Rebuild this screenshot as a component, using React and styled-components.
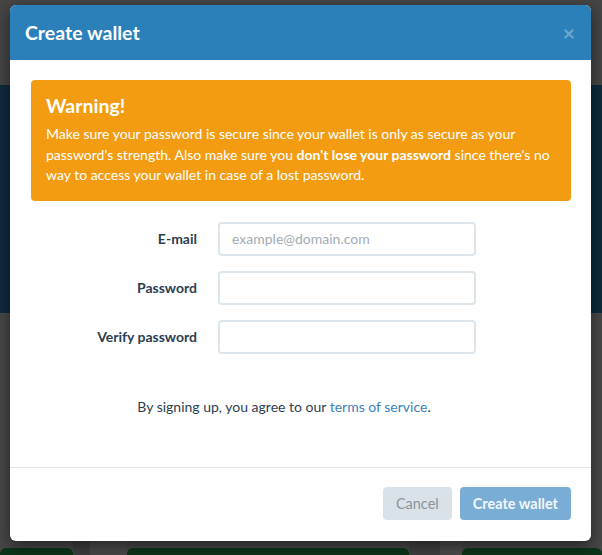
import React from "react";
import styled, { createGlobalStyle } from "styled-components";

const GlobalStyle = createGlobalStyle`
	html, body {
		margin: 0;
		padding: 0;
		background: #474747;
	}
	* {
		box-sizing: border-box;
	}
	body {
		font-family: Lato, "Open Sans", "Liberation Sans", sans-serif;
		color: #2c3e50;
	}
`;

const Page = styled.div`
	position: relative;
	width: 602px;
	height: 555px;
	overflow: hidden;
	background: #474747;
	display: flex;
	flex-direction: column;
`;

const TopBar = styled.div`
	height: 85px;
	background: #454545;
`;

const Hero = styled.div`
	height: 228px;
	background: #0f2a3d;
`;

const Content = styled.div`
	flex: 1;
	display: flex;
	align-items: flex-end;
	background: linear-gradient(
		90deg,
		#474747 0 73px,
		#3f3f3f 73px 90px,
		#4a4a4a 90px 127px,
		#474747 127px 409px,
		#404040 409px 440px,
		#4b4b4b 440px 462px,
		#474747 462px
	);
`;

const Cards = styled.div`
	display: flex;
	width: 100%;
	height: 7px;
`;

const Card = styled.div`
	width: ${(p) => p.w}px;
	margin-left: ${(p) => p.ml || 0}px;
	background: #0c3519;
	border-radius: 6px 6px 0 0;
`;

const Modal = styled.div`
	position: absolute;
	left: 10px;
	top: 5px;
	width: 581px;
	height: 536px;
	background: #fff;
	border-radius: 6px;
	box-shadow: 0 5px 15px rgba(0, 0, 0, 0.5);
	display: flex;
	flex-direction: column;
	overflow: hidden;
`;

const Header = styled.div`
	height: 55px;
	background: #2b80ba;
	display: flex;
	align-items: center;
	justify-content: space-between;
	padding: 0 16px 0 15px;
`;

const Title = styled.h4`
	margin: 0;
	font-size: 19.5px;
	font-weight: 700;
	color: #fff;
	line-height: 1.1;
`;

const Close = styled.button`
	border: 0;
	background: none;
	padding: 0;
	font-family: inherit;
	font-size: 21px;
	font-weight: 700;
	line-height: 1;
	color: #fff;
	opacity: 0.3;
	cursor: pointer;
`;

const Body = styled.div`
	flex: 1;
	padding: 20px 20px 0 21px;
	display: flex;
	flex-direction: column;
`;

const Alert = styled.div`
	background: #f39c12;
	color: #fff;
	border-radius: 4px;
	padding: 15px 15px 15px;

	h4 {
		margin: 0 0 8px;
		font-size: 19.5px;
		font-weight: 700;
		line-height: 1.1;
	}

	p {
		margin: 0;
		font-size: 14px;
		line-height: 20.5px;
	}
`;

const Form = styled.form`
	display: grid;
	grid-template-columns: 166px 258px;
	column-gap: 21px;
	row-gap: 15px;
	margin-top: 21px;
	align-items: center;
`;

const Label = styled.label`
	text-align: right;
	font-size: 14px;
	font-weight: 700;
	color: #2c3e50;
`;

const Input = styled.input`
	height: 34px;
	width: 100%;
	border: 2px solid #dce4ec;
	border-radius: 4px;
	padding: 6px 12px;
	font-family: inherit;
	font-size: 14px;
	color: #2c3e50;
	outline: none;

	&::placeholder {
		color: #a3abb2;
	}
`;

const Terms = styled.p`
	margin: 44px 0 0;
	padding-right: 34px;
	text-align: center;
	font-size: 14px;
	color: #2c3e50;

	a {
		color: #3a7fb4;
		text-decoration: none;
	}
`;

const Footer = styled.div`
	height: 74px;
	border-top: 1px solid #e5e5e5;
	display: flex;
	justify-content: flex-end;
	align-items: flex-start;
	gap: 8px;
	padding: 19px 20px 0;
`;

const Button = styled.button`
	height: 33px;
	border: 0;
	border-radius: 4px;
	padding: 0 13px;
	font-family: inherit;
	font-size: 14.5px;
	font-weight: ${(p) => (p.primary ? 700 : 400)};
	background: ${(p) => (p.primary ? "#79add5" : "#dae2e9")};
	color: ${(p) => (p.primary ? "#f2f7fb" : "#8a949b")};
	cursor: not-allowed;
`;

export default function App() {
	return (
		<>
			<GlobalStyle />
			<Page>
				<TopBar />
				<Hero />
				<Content>
					<Cards>
						<Card w={73} />
						<Card w={282} ml={54} />
						<Card w={140} ml={53} />
					</Cards>
				</Content>

				<Modal>
					<Header>
						<Title>Create wallet</Title>
						<Close aria-label="Close">×</Close>
					</Header>
					<Body>
						<Alert>
							<h4>Warning!</h4>
							<p>
								Make sure your password is secure since your wallet is only as
								secure as your password's strength. Also make sure you{" "}
								<strong>don't lose your password</strong> since there's no way
								to access your wallet in case of a lost password.
							</p>
						</Alert>
						<Form>
							<Label htmlFor="email">E-mail</Label>
							<Input id="email" type="email" placeholder="example@domain.com" />
							<Label htmlFor="password">Password</Label>
							<Input id="password" type="password" />
							<Label htmlFor="verify">Verify password</Label>
							<Input id="verify" type="password" />
						</Form>
						<Terms>
							By signing up, you agree to our <a href="#">terms of service</a>.
						</Terms>
					</Body>
					<Footer>
						<Button disabled>Cancel</Button>
						<Button primary disabled>
							Create wallet
						</Button>
					</Footer>
				</Modal>
			</Page>
		</>
	);
}
